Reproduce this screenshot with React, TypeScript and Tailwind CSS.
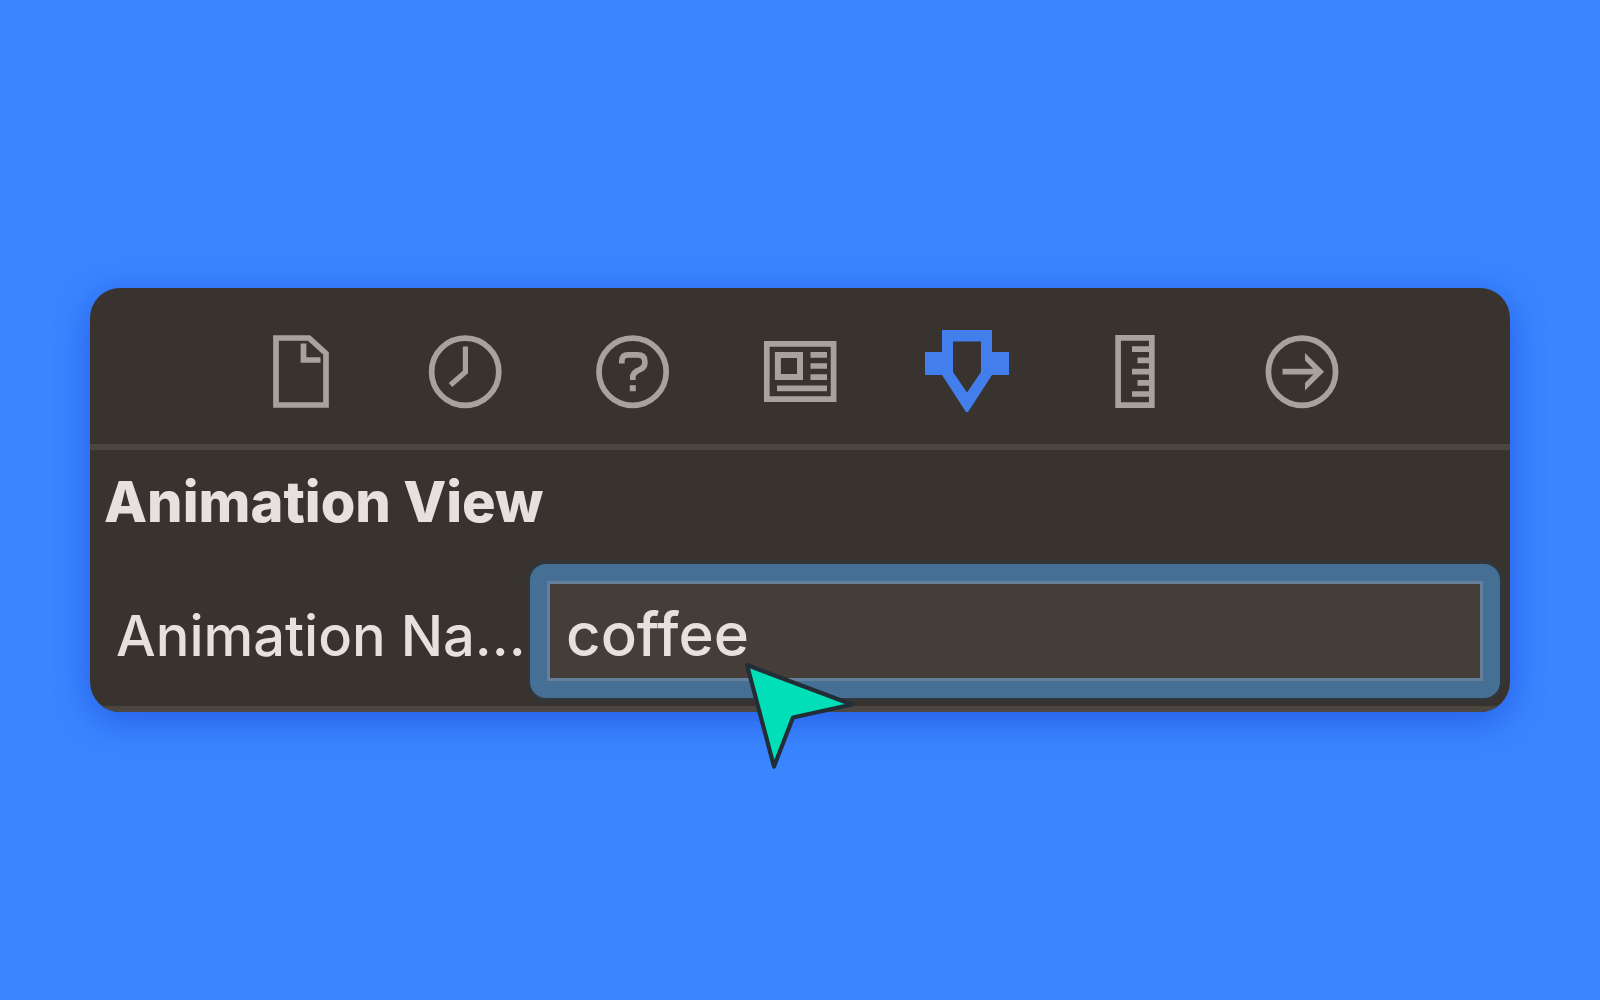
// Inspector panel: icon tabs on top, one attribute field below.

import { useState } from 'react'
import type { ReactNode } from 'react'

type Tab = {
  id: string
  label: string
  icon: ReactNode
}

// All icons share an 84x84 box and inherit colour from the button.
const tabs: Tab[] = [
  {
    id: 'file',
    label: 'File inspector',
    icon: (
      <>
        <path d="M20 8H53L70 23.5V75H20Z" />
        <path d="M47.5 13.5V30H64.5" />
      </>
    ),
  },
  {
    id: 'history',
    label: 'History inspector',
    icon: (
      <>
        <circle cx="42.2" cy="41.7" r="33.6" />
        <path d="M42.4 16.5V42L27.5 55" strokeWidth="5.2" />
      </>
    ),
  },
  {
    id: 'help',
    label: 'Quick help',
    icon: (
      <>
        <circle cx="41.6" cy="41.7" r="33.6" />
        <path d="M30.8 33.5V31Q30.8 24.8 37 24.8H46.5Q53.8 24.8 53.8 31V33Q53.8 37 50 39L46 41Q41.8 43.5 41.8 47V50" />
        <path d="M41.8 55.3V61.3" strokeWidth="6" />
      </>
    ),
  },
  {
    id: 'identity',
    label: 'Identity inspector',
    icon: (
      <>
        <path d="M8.8 13.8H75.6V69.2H8.8Z" />
        <path d="M19.9 24.9H42V47.1H19.9Z" strokeWidth="6" />
        <path d="M52.5 24.9H69M52.5 36H69M52.5 47.1H69M19 58.4H69" />
      </>
    ),
  },
  {
    id: 'attributes',
    label: 'Attributes inspector',
    icon: (
      <path
        d="M17 0H67V22H84V45H67L44 80.5Q42 84 40 80.5L17 45H0V22H17ZM28 11.5V42L42 62.5L56 42V11.5Z"
        fill="currentColor"
        fillRule="evenodd"
        stroke="none"
      />
    ),
  },
  {
    id: 'size',
    label: 'Size inspector',
    icon: (
      <>
        <path d="M25.1 7.9H58.8V75.1H25.1Z" />
        <path d="M39 19.1H58M44.5 30.4H58M39 41.6H58M44.5 52.8H58M39 64H58" />
      </>
    ),
  },
  {
    id: 'connections',
    label: 'Connections inspector',
    icon: (
      <>
        <circle cx="42" cy="41.7" r="33.6" />
        <path d="M22.5 41.7H60" />
        <path
          d="M45 23L64 41.7L45 60.5V53L56 41.7L45 30.5Z"
          fill="currentColor"
          stroke="none"
        />
      </>
    ),
  },
]

export default function App() {
  const [active, setActive] = useState('attributes')
  const [name, setName] = useState('coffee')

  return (
    <main className="flex min-h-screen items-center bg-[#3a86ff] px-[90px] font-['Inter',sans-serif] text-[#e6e1de]">
      <div className="relative w-full rounded-[30px] shadow-[0_8px_36px_rgba(10,40,200,0.45)]">
        <div className="overflow-hidden rounded-[30px] bg-[#39332f]">
          {/* Icon tabs */}
          <nav className="grid grid-cols-7 border-b-6 border-[#4c4641] px-[124px] pt-[42px] pb-[30px]">
            {tabs.map((tab) => (
              <button
                key={tab.id}
                type="button"
                aria-label={tab.label}
                onClick={() => setActive(tab.id)}
                className={`flex justify-center ${
                  active === tab.id ? 'text-[#437fec]' : 'text-[#a8a19d]'
                }`}
              >
                <svg
                  viewBox="0 0 84 84"
                  fill="none"
                  stroke="currentColor"
                  strokeWidth="5.7"
                  className="size-[84px] overflow-visible"
                >
                  {tab.icon}
                </svg>
              </button>
            ))}
          </nav>

          {/* Attributes */}
          <section className="border-b-6 border-[#4c4641] pt-4 pr-[10px] pb-2">
            <h2 className="mb-[26px] pl-[14px] text-[56px] leading-[72px] font-extrabold">Animation View</h2>
            <div className="flex items-center">
              <label
                htmlFor="animation-name"
                className="w-[440px] shrink-0 pt-[10px] pl-[26px] text-[56px] leading-[72px] font-medium whitespace-nowrap"
              >
                Animation Na…
              </label>
              <div className="min-w-0 flex-1 rounded-2xl border-[17px] border-[#466f96] shadow-[0_0_5px_2px_#2d3a43]">
                <input
                  id="animation-name"
                  type="text"
                  value={name}
                  onChange={(e) => setName(e.target.value)}
                  className="block h-[100px] w-full border-3 border-[#65809a] bg-[#443d38] px-4 pt-[6px] text-[60px] font-medium outline-none"
                />
              </div>
            </div>
          </section>
        </div>

        {/* Pointer over the field */}
        <svg
          viewBox="0 0 112 112"
          aria-hidden="true"
          className="pointer-events-none absolute -bottom-[60px] left-[654px] size-[112px]"
        >
          <path
            d="M3 5L108 44.5L49 57.5L30 106.5Z"
            fill="#00dfb8"
            stroke="#222d35"
            strokeWidth="4.2"
            strokeLinejoin="round"
          />
        </svg>
      </div>
    </main>
  )
}
